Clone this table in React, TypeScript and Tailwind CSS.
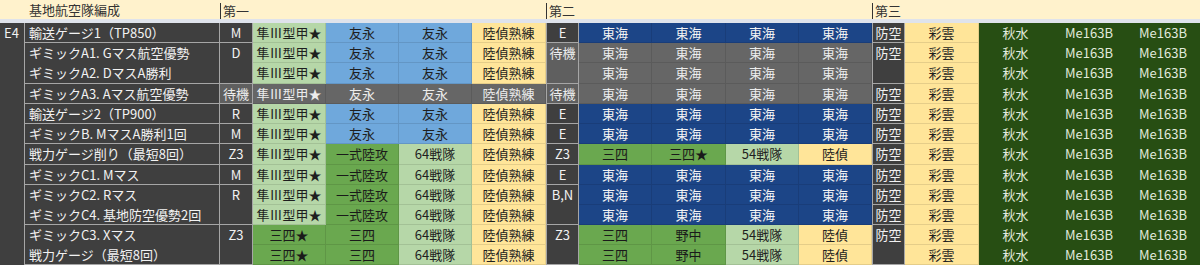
import clsx from "clsx";

const COLS =
  "grid-cols-[25px_195px_33px_73px_73px_73px_74px_33px_73px_74px_73px_73px_33px_74px_73px_74px_74px]";
const ROWS = "grid-rows-[20px_20px_21px_20px_20px_20px_21px_20px_20px_20px_20px_20px]";

// fills
const LG = "bg-[#b6d7a8] text-[#1f1f1f] border-r border-b border-black/10";
const MG = "bg-[#6aa84f] text-[#1a1a1a] border-r border-b border-black/10";
const BL = "bg-[#6fa8dc] text-[#1f1f1f] border-r border-b border-black/10";
const YE = "bg-[#ffe599] text-[#1f1f1f] border-r border-b border-black/10";
const DB = "bg-[#1c4587] text-[#f4f4f4] border-r border-b border-black/10";
const GR = "bg-[#666666] text-[#ececec] border-r border-b border-black/10";
const DG = "bg-[#274e13] text-[#e2eadd]";
const DK = "bg-[#3f3f3f] text-[#f2f2f2] border-r border-b border-[#a6a6a6]";
const WAIT = "bg-[#5f5f5f] text-[#ececec] border-r border-b border-[#a6a6a6]";

type C = [string, string];

const firstA: C[] = [["隼Ⅲ型甲★", LG], ["友永", BL], ["友永", BL], ["陸偵熟練", YE]];
const firstGray: C[] = [["隼Ⅲ型甲★", GR], ["友永", GR], ["友永", GR], ["陸偵熟練", GR]];
const firstB: C[] = [["隼Ⅲ型甲★", LG], ["一式陸攻", MG], ["64戦隊", LG], ["陸偵熟練", YE]];
const firstC: C[] = [["三四★", MG], ["三四", MG], ["64戦隊", LG], ["陸偵熟練", YE]];

const tokaiBlue: C[] = [["東海", DB], ["東海", DB], ["東海", DB], ["東海", DB]];
const tokaiGray: C[] = [["東海", GR], ["東海", GR], ["東海", GR], ["東海", GR]];
const secondC1: C[] = [["三四", MG], ["三四★", MG], ["54戦隊", LG], ["陸偵", YE]];
const secondC2: C[] = [["三四", MG], ["野中", MG], ["54戦隊", LG], ["陸偵", YE]];

const third: C[] = [["彩雲", YE], ["秋水", DG], ["Me163B", DG], ["Me163B", DG]];

type Side = { t: string; s?: string; span?: boolean } | null;

type Row = {
  name: string;
  open?: boolean; // grouped with the next row: no bottom line
  c: Side;
  first: C[];
  h: Side;
  second: C[];
  m: Side;
};

const rows: Row[] = [
  { name: "輸送ゲージ1（TP850）", c: { t: "M" }, first: firstA, h: { t: "E" }, second: tokaiBlue, m: { t: "防空" } },
  { name: "ギミックA1. Gマス航空優勢", open: true, c: { t: "D", span: true }, first: firstA, h: { t: "待機", s: WAIT, span: true }, second: tokaiGray, m: { t: "防空", span: true } },
  { name: "ギミックA2. DマスA勝利", c: null, first: firstA, h: null, second: tokaiGray, m: null },
  { name: "ギミックA3. Aマス航空優勢", c: { t: "待機", s: WAIT }, first: firstGray, h: { t: "待機", s: WAIT }, second: tokaiGray, m: { t: "防空" } },
  { name: "輸送ゲージ2（TP900）", c: { t: "R" }, first: firstA, h: { t: "E" }, second: tokaiBlue, m: { t: "防空" } },
  { name: "ギミックB. MマスA勝利1回", c: { t: "M" }, first: firstA, h: { t: "E" }, second: tokaiBlue, m: { t: "防空" } },
  { name: "戦力ゲージ削り（最短8回）", c: { t: "Z3" }, first: firstB, h: { t: "Z3" }, second: secondC1, m: { t: "防空" } },
  { name: "ギミックC1. Mマス", c: { t: "M" }, first: firstB, h: { t: "E" }, second: tokaiBlue, m: { t: "防空" } },
  { name: "ギミックC2. Rマス", open: true, c: { t: "R", span: true }, first: firstB, h: { t: "B,N", span: true }, second: tokaiBlue, m: { t: "防空" } },
  { name: "ギミックC4. 基地防空優勢2回", c: null, first: firstB, h: null, second: tokaiBlue, m: { t: "防空" } },
  { name: "ギミックC3. Xマス", open: true, c: { t: "Z3", span: true }, first: firstC, h: { t: "Z3", span: true }, second: secondC2, m: { t: "防空", span: true } },
  { name: "戦力ゲージ（最短8回）", c: null, first: firstC, h: null, second: secondC2, m: null },
];

function Fill({ cells }: { cells: C[] }) {
  return (
    <>
      {cells.map(([t, s], i) => (
        <div key={i} className={clsx("text-center leading-[19px] whitespace-nowrap overflow-hidden", s)}>
          {t}
        </div>
      ))}
    </>
  );
}

function SideCell({ cell, boxed }: { cell: Side; boxed?: boolean }) {
  if (!cell) return null;
  return (
    <div
      className={clsx(
        "text-center leading-[19px] whitespace-nowrap overflow-hidden",
        cell.s ?? DK,
        boxed && "border-l",
        cell.span && "row-span-2"
      )}
    >
      {cell.t}
    </div>
  );
}

export default function App() {
  return (
    <div className="w-[1200px] h-[267px] bg-white overflow-hidden text-[13px] font-['Noto_Sans_CJK_JP',sans-serif]">
      <div className="flex h-[19px] bg-[#fff2cc] text-[#333]">
        <div className="w-[25px]" />
        <div className="w-[195px] pl-[4px] leading-[20px]">基地航空隊編成</div>
        <div className="w-[326px] pt-[3px]">
          <div className="h-full border-l border-[#333] pl-[2px] leading-[16px]">第一</div>
        </div>
        <div className="w-[326px] pt-[3px]">
          <div className="h-full border-l border-[#333] pl-[2px] leading-[16px]">第二</div>
        </div>
        <div className="w-[328px] pt-[3px]">
          <div className="h-full border-l border-[#333] pl-[2px] leading-[16px]">第三</div>
        </div>
      </div>
      <div className="h-[4px] bg-[#dfe3eb]" />

      <div className={clsx("grid", COLS, ROWS)}>
        <div className="row-span-12 bg-[#3f3f3f] text-[#f2f2f2] border-r border-[#a6a6a6] pl-[4px] leading-[19px]">
          E4
        </div>
        {rows.map((r, i) => (
          <div key={i} className="contents">
            <div
              className={clsx(
                "bg-[#3f3f3f] text-[#f2f2f2] border-r border-[#a6a6a6] pl-[4px] leading-[19px] whitespace-nowrap overflow-hidden",
                !r.open && "border-b"
              )}
            >
              {r.name}
            </div>
            <SideCell cell={r.c} />
            <Fill cells={r.first} />
            <SideCell cell={r.h} boxed />
            <Fill cells={r.second} />
            <SideCell cell={r.m} boxed />
            <Fill cells={third} />
          </div>
        ))}
      </div>
    </div>
  );
}
